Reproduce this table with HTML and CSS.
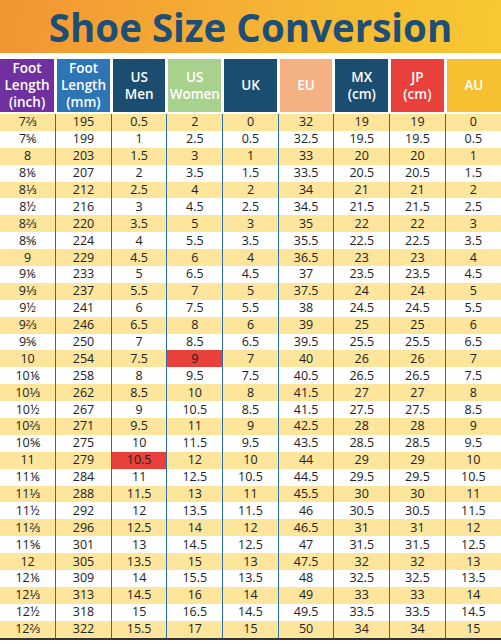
FILE: index.html
```html
<!DOCTYPE html>
<html lang="en">
<head>
    <meta charset="UTF-8">
    <meta name="viewport" content="width=device-width, initial-scale=1.0">
    <title>Shoe Size Conversion</title>
    <link rel="stylesheet" href="styles.css">
</head>
<body>
    <div class="banner">
        <h1>Shoe Size Conversion</h1>
    </div>

    <table class="sizes">
        <thead>
            <tr>
                <th class="c-inch">Foot<br>Length<br>(inch)</th>
                <th class="c-mm">Foot<br>Length<br>(mm)</th>
                <th class="c-navy">US<br>Men</th>
                <th class="c-green">US<br>Women</th>
                <th class="c-navy">UK</th>
                <th class="c-salmon">EU</th>
                <th class="c-navy">MX<br>(cm)</th>
                <th class="c-red">JP<br>(cm)</th>
                <th class="c-gold">AU</th>
            </tr>
        </thead>
        <tbody>
            <tr><td>7⅔</td><td>195</td><td>0.5</td><td>2</td><td>0</td><td>32</td><td>19</td><td>19</td><td>0</td></tr>
            <tr><td>7⅚</td><td>199</td><td>1</td><td>2.5</td><td>0.5</td><td>32.5</td><td>19.5</td><td>19.5</td><td>0.5</td></tr>
            <tr><td>8</td><td>203</td><td>1.5</td><td>3</td><td>1</td><td>33</td><td>20</td><td>20</td><td>1</td></tr>
            <tr><td>8⅙</td><td>207</td><td>2</td><td>3.5</td><td>1.5</td><td>33.5</td><td>20.5</td><td>20.5</td><td>1.5</td></tr>
            <tr><td>8⅓</td><td>212</td><td>2.5</td><td>4</td><td>2</td><td>34</td><td>21</td><td>21</td><td>2</td></tr>
            <tr><td>8½</td><td>216</td><td>3</td><td>4.5</td><td>2.5</td><td>34.5</td><td>21.5</td><td>21.5</td><td>2.5</td></tr>
            <tr><td>8⅔</td><td>220</td><td>3.5</td><td>5</td><td>3</td><td>35</td><td>22</td><td>22</td><td>3</td></tr>
            <tr><td>8⅚</td><td>224</td><td>4</td><td>5.5</td><td>3.5</td><td>35.5</td><td>22.5</td><td>22.5</td><td>3.5</td></tr>
            <tr><td>9</td><td>229</td><td>4.5</td><td>6</td><td>4</td><td>36.5</td><td>23</td><td>23</td><td>4</td></tr>
            <tr><td>9⅙</td><td>233</td><td>5</td><td>6.5</td><td>4.5</td><td>37</td><td>23.5</td><td>23.5</td><td>4.5</td></tr>
            <tr><td>9⅓</td><td>237</td><td>5.5</td><td>7</td><td>5</td><td>37.5</td><td>24</td><td>24</td><td>5</td></tr>
            <tr><td>9½</td><td>241</td><td>6</td><td>7.5</td><td>5.5</td><td>38</td><td>24.5</td><td>24.5</td><td>5.5</td></tr>
            <tr><td>9⅔</td><td>246</td><td>6.5</td><td>8</td><td>6</td><td>39</td><td>25</td><td>25</td><td>6</td></tr>
            <tr><td>9⅚</td><td>250</td><td>7</td><td>8.5</td><td>6.5</td><td>39.5</td><td>25.5</td><td>25.5</td><td>6.5</td></tr>
            <tr><td>10</td><td>254</td><td>7.5</td><td class="hit">9</td><td>7</td><td>40</td><td>26</td><td>26</td><td>7</td></tr>
            <tr><td>10⅙</td><td>258</td><td>8</td><td>9.5</td><td>7.5</td><td>40.5</td><td>26.5</td><td>26.5</td><td>7.5</td></tr>
            <tr><td>10⅓</td><td>262</td><td>8.5</td><td>10</td><td>8</td><td>41.5</td><td>27</td><td>27</td><td>8</td></tr>
            <tr><td>10½</td><td>267</td><td>9</td><td>10.5</td><td>8.5</td><td>41.5</td><td>27.5</td><td>27.5</td><td>8.5</td></tr>
            <tr><td>10⅔</td><td>271</td><td>9.5</td><td>11</td><td>9</td><td>42.5</td><td>28</td><td>28</td><td>9</td></tr>
            <tr><td>10⅚</td><td>275</td><td>10</td><td>11.5</td><td>9.5</td><td>43.5</td><td>28.5</td><td>28.5</td><td>9.5</td></tr>
            <tr><td>11</td><td>279</td><td class="hit">10.5</td><td>12</td><td>10</td><td>44</td><td>29</td><td>29</td><td>10</td></tr>
            <tr><td>11⅙</td><td>284</td><td>11</td><td>12.5</td><td>10.5</td><td>44.5</td><td>29.5</td><td>29.5</td><td>10.5</td></tr>
            <tr><td>11⅓</td><td>288</td><td>11.5</td><td>13</td><td>11</td><td>45.5</td><td>30</td><td>30</td><td>11</td></tr>
            <tr><td>11½</td><td>292</td><td>12</td><td>13.5</td><td>11.5</td><td>46</td><td>30.5</td><td>30.5</td><td>11.5</td></tr>
            <tr><td>11⅔</td><td>296</td><td>12.5</td><td>14</td><td>12</td><td>46.5</td><td>31</td><td>31</td><td>12</td></tr>
            <tr><td>11⅚</td><td>301</td><td>13</td><td>14.5</td><td>12.5</td><td>47</td><td>31.5</td><td>31.5</td><td>12.5</td></tr>
            <tr><td>12</td><td>305</td><td>13.5</td><td>15</td><td>13</td><td>47.5</td><td>32</td><td>32</td><td>13</td></tr>
            <tr><td>12⅙</td><td>309</td><td>14</td><td>15.5</td><td>13.5</td><td>48</td><td>32.5</td><td>32.5</td><td>13.5</td></tr>
            <tr><td>12⅓</td><td>313</td><td>14.5</td><td>16</td><td>14</td><td>49</td><td>33</td><td>33</td><td>14</td></tr>
            <tr><td>12½</td><td>318</td><td>15</td><td>16.5</td><td>14.5</td><td>49.5</td><td>33.5</td><td>33.5</td><td>14.5</td></tr>
            <tr><td>12⅔</td><td>322</td><td>15.5</td><td>17</td><td>15</td><td>50</td><td>34</td><td>34</td><td>15</td></tr>
        </tbody>
    </table>
</body>
</html>
```

FILE: styles.css
```css
body {
    margin: 0;
    background: #fff;
    font-family: 'Open Sans', 'Liberation Sans', sans-serif;
    color: #222;
}
.banner {
    height: 53px;
    background: linear-gradient(100deg, #f29433 0%, #f5b233 50%, #f8c832 100%);
    display: flex;
    align-items: center;
    justify-content: center;
}
h1 {
    margin: 0;
    font-size: 38.5px;
    font-weight: 700;
    color: #1d4e76;
}
.sizes {
    width: 100%;
    margin-top: 6px;
    border-collapse: collapse;
    table-layout: fixed;
    border-bottom: 2px solid #333;
}
.sizes th {
    height: 53px;
    padding: 0;
    color: #fff;
    font-size: 13.5px;
    font-weight: 600;
    line-height: 17px;
    border-left: 3px solid #fff;
    border-bottom: 2px solid #fff;
}
.sizes th:first-child {
    border-left: 0;
}
.c-inch { background: #7030a0; }
.c-mm { background: #2e75b6; }
.c-navy { background: #1b4d70; }
.c-green { background: #a9d18e; }
.c-salmon { background: #f4b183; }
.c-red { background: #e8403a; }
.c-gold { background: #f6c030; }
.sizes td {
    height: 16.9px;
    padding: 0;
    text-align: center;
    font-size: 12.5px;
    line-height: 16px;
    border-left: 1px solid #2e6da4;
}
.sizes td:first-child {
    border-left: 0;
}
.sizes tbody tr:nth-child(odd) {
    background: #fde59c;
}
.sizes td.hit {
    background: #e8403a;
}
```
